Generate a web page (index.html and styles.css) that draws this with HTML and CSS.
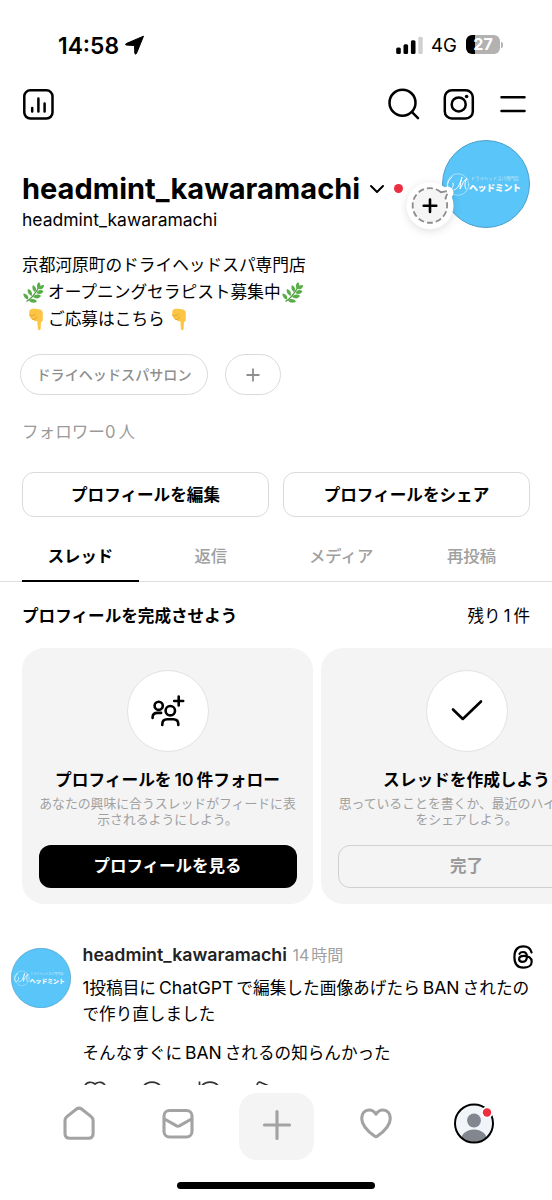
FILE: index.html
```html
<!DOCTYPE html>
<html lang="ja">
<head>
<meta charset="utf-8">
<title>headmint_kawaramachi</title>
<link rel="stylesheet" href="styles.css">
</head>
<body>
<svg class="defs" width="0" height="0" aria-hidden="true">
  <symbol id="emblem" viewBox="0 0 88 88">
    <circle cx="44" cy="44" r="43.5" fill="#5ac5f8" stroke="#4d9fc8"/>
    <g fill="none" stroke="#fff" stroke-linecap="round">
      <circle cx="16" cy="44.500" r="10.800" stroke-width=".6" opacity=".75"/>
      <path d="M10 37c-4 3-6 9-3 12 3 1 5-3 4-6M12 50c4-1 6-6 8-13-1 4-2 8-2 12 2-4 4-9 7-11-2 4-3 8-1 11" stroke-width="1"/>
    </g>
  </symbol>
  <symbol id="leaf" viewBox="0 0 22 22">
    <path d="M3.500 19.500C8 17 12 12 16 5" fill="none" stroke="#4c9a3a" stroke-width="1.300"/>
    <g fill="#58ad48">
      <path d="M15 7c-2-3-1-5 1-7 2 3 2 5-1 7z"/>
      <path d="M16 7c0-3 2-4 5-4 0 3-2 5-5 4z"/>
      <path d="M12 10C9 8 9 5 10 3c3 2 4 4 2 7z"/>
      <path d="M13.500 11c1-3 4-4 7-2-1 3-4 4-7 2z"/>
      <path d="M8.500 14C5 12 4 9 5 7c3 1 5 4 3.500 7z"/>
      <path d="M10 15c2-3 6-3 8-1-2 3-5 3-8 1z"/>
      <path d="M5 17.500C2 17 0 14 .5 11.500 4 12 6 14 5 17.500z"/>
      <path d="M6 18.500c2-2 6-2 8 1-3 2-6 1.500-8-1z"/>
    </g>
  </symbol>
  <symbol id="point" viewBox="0 0 16 23">
    <path d="M1.500 2.500C2.500 1.200 4 .6 7 .8l5 .7c2 .4 2.800 2 2.800 4v6c0 1.500-.8 2.300-1.800 2.500l-.4 7c-.2 1.600-2.600 1.600-2.700 0l-.6-8c-1.500.6-3 .2-3.600-1C3.500 11.800 2 10 1 7z" fill="#fcc544"/>
    <path d="M2.500 7.500c2 .5 4 0 5-1.500M4.500 11.500c2 .3 3.500-.5 4-2.500" fill="none" stroke="#dc9a35" stroke-width=".8" stroke-linecap="round"/>
  </symbol>
</svg>

<main class="screen">
  <header class="status">
    <span class="clock">14:58</span>
    <svg class="locate" width="20" height="20" viewBox="0 0 20 20"><path d="M18.500 1.200 1.200 8.600c-1 .4-.8 1.400.3 1.500l8 .4.300 7.600c.1 1.200 1.200 1.400 1.700.3z" stroke="#000" stroke-linejoin="round"/></svg>
    <svg class="signal" width="28" height="19" viewBox="0 0 28 19"><rect x=".2" y="11.500" width="4.600" height="6.500" rx="1.500"/><rect x="7.500" y="8.300" width="4.600" height="9.700" rx="1.500"/><rect x="14.900" y="4.300" width="4.600" height="13.700" rx="1.500"/><rect x="22.300" y=".8" width="4.400" height="17.200" rx="1.500" fill="#d0d0d0"/></svg>
    <span class="network">4G</span>
    <span class="battery"><span class="level">27</span><i class="nub"></i></span>
  </header>

  <nav class="toolbar">
    <svg width="32" height="32" viewBox="0 0 32 32" fill="none" stroke="#000" stroke-width="2.500" stroke-linecap="round"><rect x="2.300" y="2.300" width="28.200" height="28.200" rx="6"/><path d="M10.200 20v3.500M16.400 10.500v13M22.600 15.500v8"/></svg>
    <span class="spacer"></span>
    <svg width="32" height="32" viewBox="0 0 32 32" fill="none" stroke="#000" stroke-width="2.500" stroke-linecap="round"><circle cx="14.500" cy="14.700" r="13"/><path d="m24 24.200 6 6"/></svg>
    <svg width="32" height="32" viewBox="0 0 32 32" fill="none" stroke="#000" stroke-width="2.500"><rect x="1.800" y="2.300" width="28" height="28.200" rx="7"/><circle cx="15.700" cy="16.400" r="7"/><circle cx="23.600" cy="8.500" r="1.800" fill="#000" stroke="none"/></svg>
    <svg class="menu" width="26" height="32" viewBox="0 0 26 32" fill="none" stroke="#000" stroke-width="2.500" stroke-linecap="round"><path d="M1.500 9.300h23M1.500 23h23"/></svg>
  </nav>

  <section class="profile">
    <div class="who">
      <div class="title"><h1>headmint_kawaramachi</h1>
        <svg class="chev" width="16" height="10" viewBox="0 0 16 10" fill="none" stroke="#000" stroke-width="2" stroke-linecap="round" stroke-linejoin="round"><path d="m2 2 6 6 6-6"/></svg><i class="dot"></i></div>
      <p class="handle">headmint_kawaramachi</p>
    </div>
    <div class="portrait">
      <svg width="88" height="88" viewBox="0 0 88 88"><use href="#emblem"/><text class="logo-sub" x="29" y="40.300" textLength="48">ドライヘッドスパ専門店</text><text class="logo-name" x="27" y="50.800" textLength="52">ヘッドミント</text></svg>
      <svg class="bubble" width="70" height="70" viewBox="0 0 70 70" fill="none">
        <g class="halo"><circle cx="35" cy="34.700" r="23.500" fill="#fff"/><circle cx="52.500" cy="21.500" r="6" fill="#fff"/></g>
        <path d="M46 21.200A17.300 17.300 0 1 0 50.500 27l2-4.500c.5-1.500-.2-2.400-1.700-2.200z" fill="#f5f5f5" stroke="#8c8c8c" stroke-width="1.800" stroke-dasharray="6 3"/>
        <path d="M35 28.500v12.500M28.700 34.700h12.600" stroke="#000" stroke-width="2.600" stroke-linecap="round"/>
      </svg>
    </div>
  </section>

  <section class="bio">
    <p>京都河原町のドライヘッドスパ専門店</p>
    <p><svg class="leaf first" width="22" height="22"><use href="#leaf"/></svg><span>オープニングセラピスト募集中</span><svg class="leaf" width="22" height="22"><use href="#leaf"/></svg></p>
    <p><svg class="point first" width="16" height="23"><use href="#point"/></svg><span>ご応募はこちら</span><svg class="point" width="16" height="23"><use href="#point"/></svg></p>
  </section>

  <div class="chips"><span class="chip">ドライヘッドスパサロン</span><span class="chip add"><svg width="14" height="14" stroke="#8e8e8e" stroke-width="1.800"><path d="M7 .5v13M.5 7h13"/></svg></span></div>
  <p class="followers">フォロワー0<span>人</span></p>
  <div class="actions"><button>プロフィールを編集</button><button>プロフィールをシェア</button></div>

  <nav class="tabs"><a class="on">スレッド</a><a>返信</a><a>メディア</a><a>再投稿</a></nav>

  <div class="finish"><h2>プロフィールを完成させよう</h2><span>残り<b>1</b>件</span></div>

  <section class="cards">
    <article class="card">
      <div class="badge"><svg class="people" width="36" height="34" viewBox="0 0 36 34" fill="none" stroke="#000" stroke-width="2.600" stroke-linecap="round"><circle cx="9.700" cy="11.800" r="4.100"/><circle cx="21.300" cy="16.700" r="4.700"/><path d="M29.700 2.500v9M25.200 7h9M3.600 24v-.5c0-3.200 2-4.600 5-4.600h3.500M13.300 31v-.8c0-3.400 1.800-4.900 5-4.900h6c3.200 0 5 1.500 5 4.900v.8"/></svg></div>
      <h3>プロフィールを<b>10</b>件フォロー</h3>
      <p>あなたの興味に合うスレッドがフィードに表<br>示されるようにしよう。</p>
      <button class="solid">プロフィールを見る</button>
    </article>
    <article class="card">
      <div class="badge"><svg width="34" height="28" viewBox="0 0 34 28" fill="none" stroke="#000" stroke-width="2.600" stroke-linecap="round" stroke-linejoin="round"><path d="m3 12.500 9.800 9.500L31 4.500"/></svg></div>
      <h3>スレッドを作成しよう</h3>
      <p>思っていることを書くか、最近のハイライト<br>をシェアしよう。</p>
      <button class="done">完了</button>
    </article>
  </section>

  <article class="post">
    <svg class="avatar" width="60" height="60" viewBox="0 0 88 88"><use href="#emblem"/><text class="logo-sub" x="29" y="40.300" textLength="48">ドライヘッドスパ専門店</text><text class="logo-name" x="27" y="50.800" textLength="52">ヘッドミント</text></svg>
    <div class="body">
      <div class="meta"><strong>headmint_kawaramachi</strong><time>14<span>時間</span></time>
        <svg class="threads" width="20" height="24" viewBox="0 0 20 24" fill="none" stroke="#000" stroke-width="2.200" stroke-linecap="round"><path d="M18.600 7.500C17.600 3.500 14.600 1.300 10.400 1.300 4.500 1.300 1.400 5 1.400 12s3.100 10.700 9 10.700c4.800 0 8.300-2.300 8.300-6 0-4-3.700-5.900-7.800-5.900-3 0-4.800 1.200-4.800 3.200 0 1.700 1.500 2.800 3.500 2.800 2.600 0 4.300-1.600 4.300-5 0-3.200-1.500-4.800-3.900-4.800-1.700 0-2.800.6-3.500 1.800"/></svg></div>
      <p class="line a">1投稿目に<b>ChatGPT</b>で編集した画像あげたら<b>BAN</b>されたの</p>
      <p class="line">で作り直しました</p>
      <p class="line gap">そんなすぐに<b>BAN</b>されるの知らんかった</p>
      <svg class="peek" width="200" height="4" viewBox="0 0 200 4" fill="none" stroke="#333" stroke-width="1.700"><path d="M2 4.500C4 .5 9 .5 12 3 15 .5 20 .5 22 4.500M61 4.500c4-4.500 12-4.500 16 0M116.500.5v4M119 4.500c4-4.500 12-4.500 16 0M174 4.500c.5-4 2.500-4 5-2.500l6 2.500"/></svg>
    </div>
  </article>

  <nav class="dock">
    <svg width="40" height="44" viewBox="0 0 40 44" fill="none" stroke="#a3a3a3" stroke-width="3.100" stroke-linejoin="round"><path d="M6 19.500c0-1.700.6-2.800 1.900-3.900l9.300-7.300c2.200-1.700 3.500-1.700 5.700 0l9.300 7.300c1.300 1.100 1.900 2.200 1.900 3.900v13c0 3-1.800 4.800-4.800 4.800H10.800c-3 0-4.800-1.800-4.800-4.800z"/></svg>
    <svg width="40" height="44" viewBox="0 0 40 44" fill="none" stroke="#a3a3a3" stroke-width="3.100" stroke-linejoin="round"><rect x="6" y="9.500" width="28" height="26.500" rx="5.500"/><path d="m6.500 18 11.700 6.700c1.300.8 2.300.8 3.600 0L33.500 18"/></svg>
    <span class="compose"><svg width="30" height="32" stroke="#a3a3a3" stroke-width="3.200" stroke-linecap="round"><path d="M15 2.500v27M2.500 16h25"/></svg></span>
    <svg width="40" height="44" viewBox="0 0 40 44" fill="none" stroke="#a3a3a3" stroke-width="3.100" stroke-linejoin="round"><path d="M20 13.200C18 10 15.500 9 13 9c-4.300 0-7.300 3.500-7.300 8.300 0 7 6 13 12.800 17.800 1.100.8 1.900.8 3 0 6.800-4.800 12.800-10.800 12.800-17.800C34.300 12.500 31.300 9 27 9c-2.500 0-5 1-7 4.200z"/></svg>
    <svg class="me" width="40" height="44" viewBox="0 0 40 44"><defs><clipPath id="face"><circle cx="20" cy="21.500" r="18.500"/></clipPath></defs><circle cx="20" cy="21.500" r="18.700" fill="#f1f4f9"/><g clip-path="url(#face)" fill="#82868f"><circle cx="20" cy="18.500" r="6.900"/><ellipse cx="20" cy="38" rx="13" ry="10.500"/></g><circle cx="20" cy="21.500" r="19" fill="none" stroke="#000" stroke-width="2"/><circle cx="33" cy="10.500" r="5.900" fill="#fff"/><circle cx="33" cy="10.500" r="4.200" fill="#eb2f40"/></svg>
  </nav>
  <div class="home-bar"></div>
</main>
</body>
</html>
```

FILE: styles.css
```css
* { box-sizing: border-box; margin: 0; padding: 0; }
body { background: #fff; color: #000; font-family: Inter, "Noto Sans CJK JP", sans-serif; font-size: 16.6px; overflow: hidden; }
svg { display: block; flex: none; }
button { font: inherit; background: none; border: 0; color: inherit; }
.defs { position: absolute; }
.logo-sub { font: 4.4px "Noto Sans CJK JP", sans-serif; fill: #fff; opacity: .6; }
.logo-name { font: 900 9px "Noto Sans CJK JP", sans-serif; fill: #fff; }

.screen { width: 552px; height: 1200px; overflow: hidden; display: flex; flex-direction: column; white-space: nowrap; }

.status { height: 80px; padding: 10px 49px 0 58px; display: flex; align-items: center; flex: none; }
.clock { font-size: 22.8px; font-weight: 600; width: 67px; }
.signal { margin-left: 251px; }
.network { font-size: 18.6px; font-weight: 400; width: 35px; margin-left: 7px; line-height: 20px; }
.battery { display: flex; align-items: center; gap: 1px; margin-top: -1px; }
.level { width: 34px; height: 19px; border-radius: 6px; background: linear-gradient(90deg, #000 9px, #b2b2b2 9px); color: #fff; font-size: 16px; font-weight: 700; line-height: 19px; text-align: center; }
.nub { width: 2px; height: 6px; border-radius: 0 2px 2px 0; background: #b2b2b2; }

.toolbar { height: 60px; padding: 8px 26px 0 22px; display: flex; flex: none; }
.spacer { flex: 1; }
.toolbar svg + svg { margin-left: 23px; }
.toolbar svg.menu { margin-left: 25px; }

.profile { height: 88px; padding: 0 22px; display: flex; justify-content: space-between; flex: none; }
.who { padding-top: 30px; }
.title { display: flex; align-items: center; height: 36px; }
h1 { font-size: 29px; font-weight: 700; width: 347px; }
.chev { margin-top: 1px; }
.dot { width: 9px; height: 9px; border-radius: 50%; background: #eb2f40; margin-left: 9px; }
.handle { font-size: 17.5px; line-height: 24px; margin-top: 2px; }
.portrait { position: relative; width: 88px; }
.bubble { position: absolute; left: -47px; top: 31px; }
.halo { filter: drop-shadow(0 2px 4px rgba(0, 0, 0, .12)); }

.bio { padding: 23.5px 22px 0; height: 126px; flex: none; }
.bio p { height: 27.4px; line-height: 27.4px; display: flex; align-items: center; font-size: 16.7px; }
.leaf.first { margin: 0 3px 0 1px; }
.leaf { margin-left: 1px; }
.point.first { margin: 0 4px 0 6px; }
.point { margin-left: 6px; }

.chips { display: flex; gap: 17px; padding-left: 20px; height: 41px; flex: none; }
.chip { width: 188px; border: 1.5px solid #dadada; border-radius: 21px; display: flex; align-items: center; justify-content: center; color: #8e8e8e; font-size: 14.1px; font-weight: 500; padding-bottom: 2px; }
.chip.add { width: 56px; padding-bottom: 0; }
.followers { margin: 25px 0 0 22px; height: 24px; line-height: 24px; color: #999; flex: none; }
.followers span { margin-left: 3px; }
.actions { display: flex; gap: 14px; padding: 0 22px; margin-top: 28px; height: 45px; flex: none; }
.actions button { flex: 1; border: 1.5px solid #dadada; border-radius: 12px; font-weight: 700; padding-bottom: 1px; }

.tabs { display: flex; gap: 13.400px; padding: 0 22px; margin-top: 15px; height: 50px; border-bottom: 1px solid #dedede; flex: none; }
.tabs a { flex: 1; height: 50px; text-align: center; line-height: 49px; font-size: 16.4px; font-weight: 500; color: #a0a0a0; }
.tabs .on { color: #000; font-weight: 700; border-bottom: 2px solid #000; }

.finish { display: flex; justify-content: space-between; align-items: center; padding: 0 22px 1px; height: 66px; flex: none; }
.finish h2 { font-size: 16.6px; font-weight: 700; }
.finish b { font-weight: 400; margin: 0 3px; }

.cards { display: flex; gap: 8px; padding-left: 22px; height: 256px; flex: none; }
.card { width: 291px; flex: none; border-radius: 22px; background: #f4f4f4; padding: 22px 16px 0 16px; text-align: center; }
.badge { width: 82px; height: 82px; margin: 0 auto; border: 1px solid #e2e2e2; border-radius: 50%; background: #fff; display: flex; align-items: center; justify-content: center; }
.people { margin-right: 2px; }
.card h3 { font-size: 16.7px; font-weight: 700; line-height: 26px; margin-top: 15px; }
.card h3 b { font-weight: 600; font-size: 17.5px; margin: 0 3px; }
.card p { font-size: 12.85px; line-height: 16.500px; color: #a0a0a0; margin-top: 2.5px; height: 33px; }
.card button { width: 258px; height: 43px; margin-top: 16px; border-radius: 12px; font-weight: 700; font-size: 16.500px; padding-bottom: 2px; }
.solid { background: #000; color: #fff; }
.card .done { border: 1.5px solid #d0d0d0; color: #999; }

.post { display: flex; padding: 40px 20px 0 11px; height: 181px; flex: none; overflow: hidden; }
.avatar { margin-top: 4px; margin-right: 11.5px; }
.body { flex: 1; }
.meta { display: flex; height: 22px; align-items: center; margin-top: -1px; }
.meta strong { font-size: 17.8px; font-weight: 600; color: #222; width: 210px; }
.meta time { color: #a0a0a0; font-size: 16px; flex: 1; }
.meta time span { margin-left: 2px; }
.threads { margin: 5px -1px 0 0; }
.line { font-size: 16.6px; line-height: 27px; height: 27px; }
.line.a { margin-top: 9px; font-size: 16.7px; }
.line.gap { margin-top: 11px; }
.line b { font-weight: 400; font-size: 17.500px; margin: 0 3px; }
.peek { margin-top: 15px; }

.dock { display: flex; justify-content: space-between; align-items: flex-start; padding: 1px 58px 0 59px; height: 68px; margin-top: 7px; flex: none; }
.dock > svg { margin-top: 8px; }
.dock > .me { margin-top: 9px; }
.compose { width: 75px; height: 67px; margin: 0 -17px; border-radius: 18px; background: #f4f4f4; display: flex; align-items: center; justify-content: center; padding-bottom: 4px; }
.home-bar { width: 198px; height: 7px; border-radius: 4px; background: #000; margin: 22px auto 0; flex: none; }
```
